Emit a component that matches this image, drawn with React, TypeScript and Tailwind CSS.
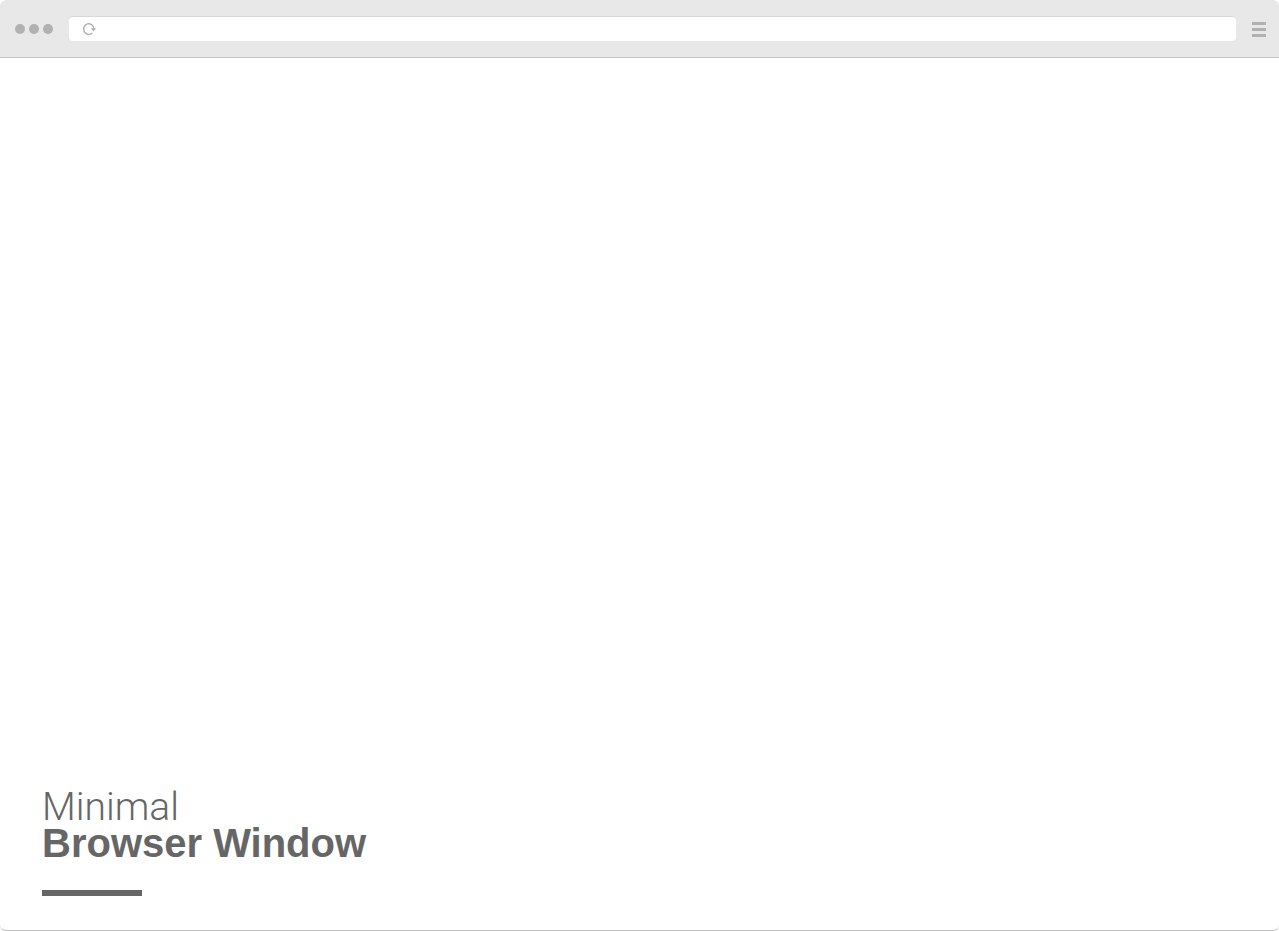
function WindowDots() {
  return (
    <div className="flex shrink-0 gap-1" aria-hidden="true">
      <span className="size-2.5 rounded-full bg-[#b1b1b1]" />
      <span className="size-2.5 rounded-full bg-[#b1b1b1]" />
      <span className="size-2.5 rounded-full bg-[#b1b1b1]" />
    </div>
  );
}

function AddressBar() {
  return (
    <div className="flex h-[25px] min-w-0 flex-1 items-center rounded border-t border-[#d9d9d9] bg-white pr-2 pl-[13px]">
      <button type="button" aria-label="Reload" className="shrink-0">
        <svg width="15" height="14" viewBox="0 0 15 14" fill="none" className="block">
          <path d="M10.2 11A5.1 5.4 0 1 1 11.8 7" stroke="#b1b1b1" strokeWidth="1.5" />
          <path d="M8.8 6.3H14.2L11.5 9.6Z" fill="#b1b1b1" />
        </svg>
      </button>
      <input
        type="text"
        aria-label="Address"
        className="h-full min-w-0 flex-1 bg-transparent px-2 text-sm text-[#666666] outline-none"
      />
    </div>
  );
}

export default function App() {
  return (
    <div className="flex min-h-screen flex-col overflow-hidden rounded-md border-b border-[#bdbdbd] bg-white font-['Liberation_Sans',sans-serif]">
      <header className="flex h-[58px] items-center gap-4 border-b border-[#c6c6c6] bg-[#e8e8e8] pr-[13px] pl-[15px]">
        <WindowDots />
        <AddressBar />
        <button type="button" aria-label="Menu" className="flex w-3.5 shrink-0 flex-col gap-[3px] pt-0.5">
          <span className="h-[3px] bg-[#b1b1b1]" />
          <span className="h-[3px] bg-[#b1b1b1]" />
          <span className="h-[3px] bg-[#b1b1b1]" />
        </button>
      </header>
      <main className="flex flex-1 flex-col justify-end px-[42px] pb-[34px]">
        <h1 className="text-[40px] leading-9 text-[#666666]">
          <span className="block font-['Roboto',sans-serif] text-[39px] leading-9 font-light">Minimal</span>
          <span className="block font-bold">Browser Window</span>
        </h1>
        <div className="mt-[29px] h-1.5 w-25 bg-[#666666]" />
      </main>
    </div>
  );
}
